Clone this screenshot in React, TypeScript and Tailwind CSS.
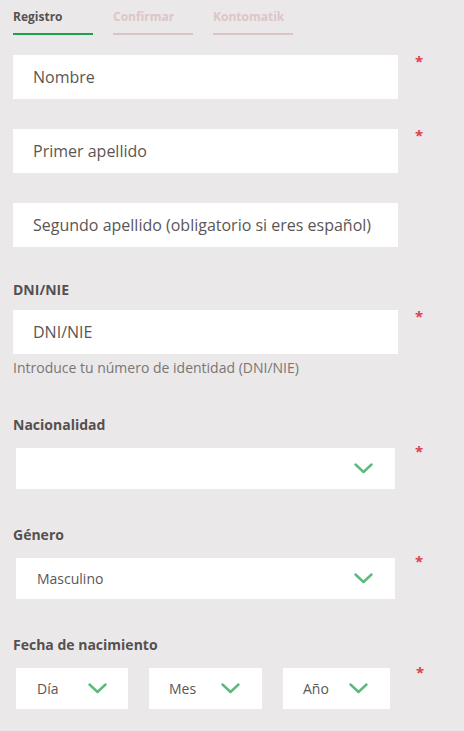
import { ReactNode } from 'react'

const font = { fontFamily: '"Open Sans", "Liberation Sans", sans-serif' }

function Chevron() {
  return (
    <svg width="19" height="11" viewBox="0 0 19 11" fill="none">
      <path d="M1.5 1.5 L9.5 9 L17.5 1.5" stroke="#5cba7d" strokeWidth="2.4" strokeLinecap="round" strokeLinejoin="round" />
    </svg>
  )
}

function Star({ className = 'ml-[17px] -mt-[1px]' }: { className?: string }) {
  return <span className={`text-[15px] font-bold leading-none text-[#d9434b] ${className}`}>*</span>
}

function Field({ placeholder, required }: { placeholder: string; required?: boolean }) {
  return (
    <div className="flex items-start">
      <div className="flex h-[44px] w-[385px] items-center bg-white pl-[20px] text-[16px] text-[#5b5656]">
        {placeholder}
      </div>
      {required && <Star />}
    </div>
  )
}

function Label({ children }: { children: ReactNode }) {
  return <div className="text-[14px] font-bold leading-[19px] text-[#555050]">{children}</div>
}

function Select({ value, className }: { value?: string; className: string }) {
  return (
    <div className={`flex h-[41px] items-center bg-white text-[14px] text-[#5b5656] ${className}`}>
      <span className="flex-1">{value}</span>
      <Chevron />
    </div>
  )
}

export default function App() {
  const tabs = [
    { name: 'Registro', active: true },
    { name: 'Confirmar', active: false },
    { name: 'Kontomatik', active: false },
  ]

  return (
    <div className="min-h-[731px] w-[464px] bg-[#ebe8e9] pl-[13px]" style={font}>
      {/* Steps */}
      <div className="flex gap-[20px] pt-[9px]">
        {tabs.map((t) => (
          <div key={t.name} className="w-[80px]">
            <div className={`text-[12px] font-bold leading-[16px] ${t.active ? 'text-[#565252]' : 'text-[#dcc6c6]'}`}>
              {t.name}
            </div>
            <div className={`mt-[8px] h-[2px] ${t.active ? 'bg-[#1ba24b]' : 'bg-[#dcc4c4]'}`} />
          </div>
        ))}
      </div>

      <div className="mt-[20px] flex flex-col gap-[30px]">
        <Field placeholder="Nombre" required />
        <Field placeholder="Primer apellido" required />
        <Field placeholder="Segundo apellido (obligatorio si eres español)" />
      </div>

      <div className="mt-[33px]">
        <Label>DNI/NIE</Label>
        <div className="mt-[11px]">
          <Field placeholder="DNI/NIE" required />
        </div>
        <div className="mt-[4px] text-[14px] leading-[19px] text-[#7a7575]">
          Introduce tu número de identidad (DNI/NIE)
        </div>
      </div>

      <div className="mt-[38px]">
        <Label>Nacionalidad</Label>
        <div className="mt-[14px] flex items-start">
          <Select className="ml-[3px] w-[379px] pr-[22px]" />
          <Star className="ml-[20px] -mt-[4px]" />
        </div>
      </div>

      <div className="mt-[36px]">
        <Label>Género</Label>
        <div className="mt-[14px] flex items-start">
          <Select value="Masculino" className="ml-[3px] w-[379px] pl-[21px] pr-[22px]" />
          <Star className="ml-[20px] -mt-[4px]" />
        </div>
      </div>

      <div className="mt-[36px]">
        <Label>Fecha de nacimiento</Label>
        <div className="mt-[14px] flex items-start">
          <Select value="Día" className="ml-[3px] w-[112px] pl-[21px] pr-[21px]" />
          <Select value="Mes" className="ml-[21px] w-[113px] pl-[20px] pr-[22px]" />
          <Select value="Año" className="ml-[21px] w-[107px] pl-[20px] pr-[22px]" />
          <Star className="ml-[26px] -mt-[3px]" />
        </div>
      </div>
    </div>
  )
}
